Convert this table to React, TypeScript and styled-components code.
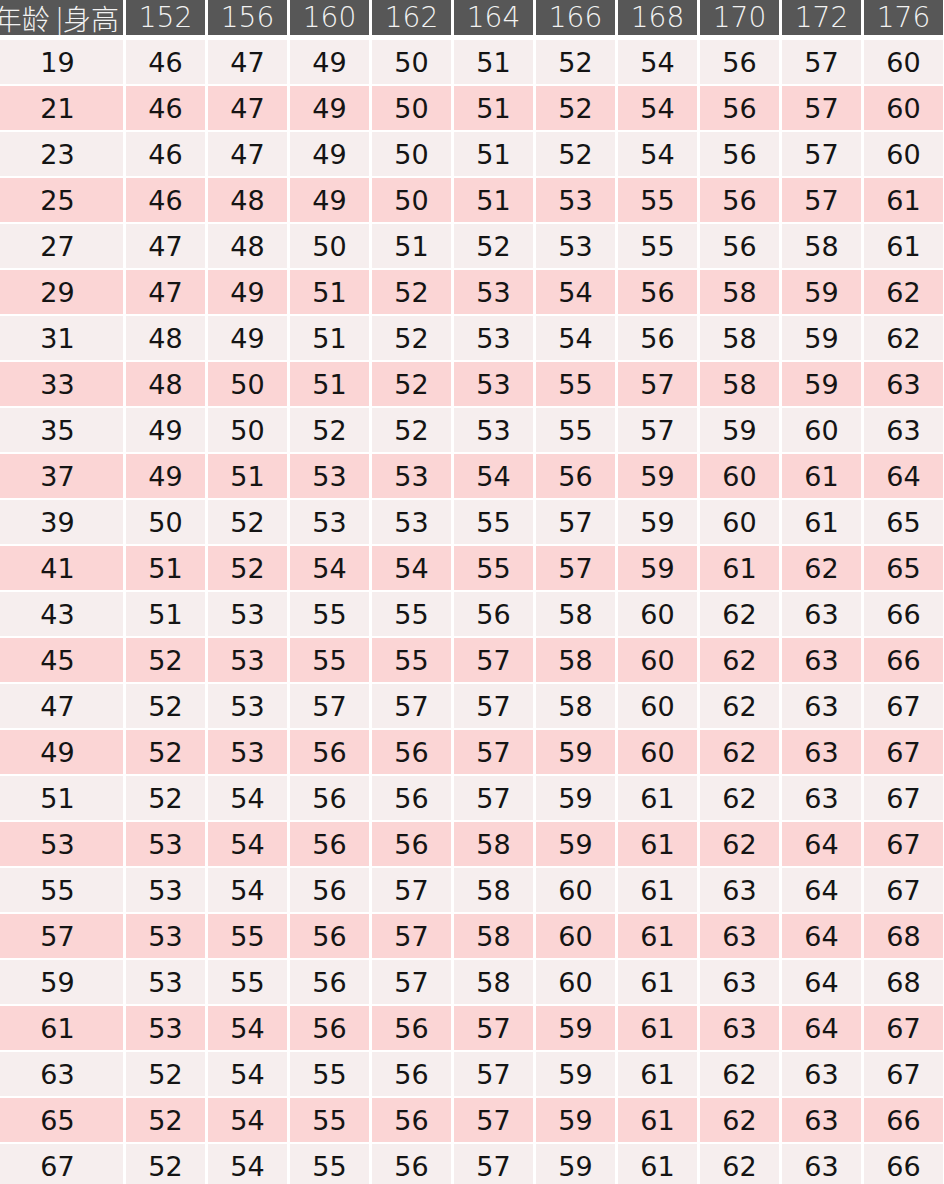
import { createGlobalStyle } from 'styled-components';
import styled from 'styled-components';

const GlobalStyle = createGlobalStyle`
  html, body {
    margin: 0;
    padding: 0;
    background: #ffffff;
    overflow: hidden;
  }
`;

const heights = [152, 156, 160, 162, 164, 166, 168, 170, 172, 176];

const rows: [number, number[]][] = [
  [19, [46, 47, 49, 50, 51, 52, 54, 56, 57, 60]],
  [21, [46, 47, 49, 50, 51, 52, 54, 56, 57, 60]],
  [23, [46, 47, 49, 50, 51, 52, 54, 56, 57, 60]],
  [25, [46, 48, 49, 50, 51, 53, 55, 56, 57, 61]],
  [27, [47, 48, 50, 51, 52, 53, 55, 56, 58, 61]],
  [29, [47, 49, 51, 52, 53, 54, 56, 58, 59, 62]],
  [31, [48, 49, 51, 52, 53, 54, 56, 58, 59, 62]],
  [33, [48, 50, 51, 52, 53, 55, 57, 58, 59, 63]],
  [35, [49, 50, 52, 52, 53, 55, 57, 59, 60, 63]],
  [37, [49, 51, 53, 53, 54, 56, 59, 60, 61, 64]],
  [39, [50, 52, 53, 53, 55, 57, 59, 60, 61, 65]],
  [41, [51, 52, 54, 54, 55, 57, 59, 61, 62, 65]],
  [43, [51, 53, 55, 55, 56, 58, 60, 62, 63, 66]],
  [45, [52, 53, 55, 55, 57, 58, 60, 62, 63, 66]],
  [47, [52, 53, 57, 57, 57, 58, 60, 62, 63, 67]],
  [49, [52, 53, 56, 56, 57, 59, 60, 62, 63, 67]],
  [51, [52, 54, 56, 56, 57, 59, 61, 62, 63, 67]],
  [53, [53, 54, 56, 56, 58, 59, 61, 62, 64, 67]],
  [55, [53, 54, 56, 57, 58, 60, 61, 63, 64, 67]],
  [57, [53, 55, 56, 57, 58, 60, 61, 63, 64, 68]],
  [59, [53, 55, 56, 57, 58, 60, 61, 63, 64, 68]],
  [61, [53, 54, 56, 56, 57, 59, 61, 63, 64, 67]],
  [63, [52, 54, 55, 56, 57, 59, 61, 62, 63, 67]],
  [65, [52, 54, 55, 56, 57, 59, 61, 62, 63, 66]],
  [67, [52, 54, 55, 56, 57, 59, 61, 62, 63, 66]],
];

const Grid = styled.div`
  display: grid;
  grid-template-columns: 123px repeat(10, 79px);
  grid-template-rows: 38px;
  grid-auto-rows: 44px;
  column-gap: 3px;
  row-gap: 2px;
  width: 944px;
  height: 1184px;
  overflow: hidden;
  background: #ffffff;
  font-family: 'DejaVu Sans', 'Noto Sans CJK SC', sans-serif;
`;

const HeadCell = styled.div<{ $corner?: boolean }>`
  align-self: start;
  height: 35px;
  display: flex;
  align-items: center;
  justify-content: ${({ $corner }) => ($corner ? 'flex-end' : 'center')};
  padding-right: ${({ $corner }) => ($corner ? '4px' : '0')};
  background: #575757;
  color: #f2f2f2;
  font-size: ${({ $corner }) => ($corner ? '28px' : '28px')};
  font-family: ${({ $corner }) =>
    $corner ? "'Noto Sans CJK SC', sans-serif" : "'DejaVu Sans', sans-serif"};
  font-weight: 300;
  white-space: nowrap;
  overflow: hidden;
`;

const Cell = styled.div<{ $pink: boolean }>`
  display: flex;
  align-items: center;
  justify-content: center;
  background: ${({ $pink }) => ($pink ? '#fbd5d5' : '#f6eeee')};
  color: #141414;
  font-size: 27px;
  font-weight: 400;
  padding-top: 1px;
`;

const AgeCell = styled(Cell)`
  padding-right: 8px;
`;

function Row({ age, vals, pink }: { age: number; vals: number[]; pink: boolean }) {
  return (
    <>
      <AgeCell $pink={pink}>{age}</AgeCell>
      {vals.map((v, j) => (
        <Cell key={j} $pink={pink}>
          {v}
        </Cell>
      ))}
    </>
  );
}

export default function App() {
  return (
    <>
      <GlobalStyle />
      <Grid>
        <HeadCell $corner>年龄 |身高</HeadCell>
        {heights.map((h) => (
          <HeadCell key={h}>{h}</HeadCell>
        ))}
        {rows.map(([age, vals], i) => (
          <Row key={age} age={age} vals={vals} pink={i % 2 === 1} />
        ))}
      </Grid>
    </>
  );
}
